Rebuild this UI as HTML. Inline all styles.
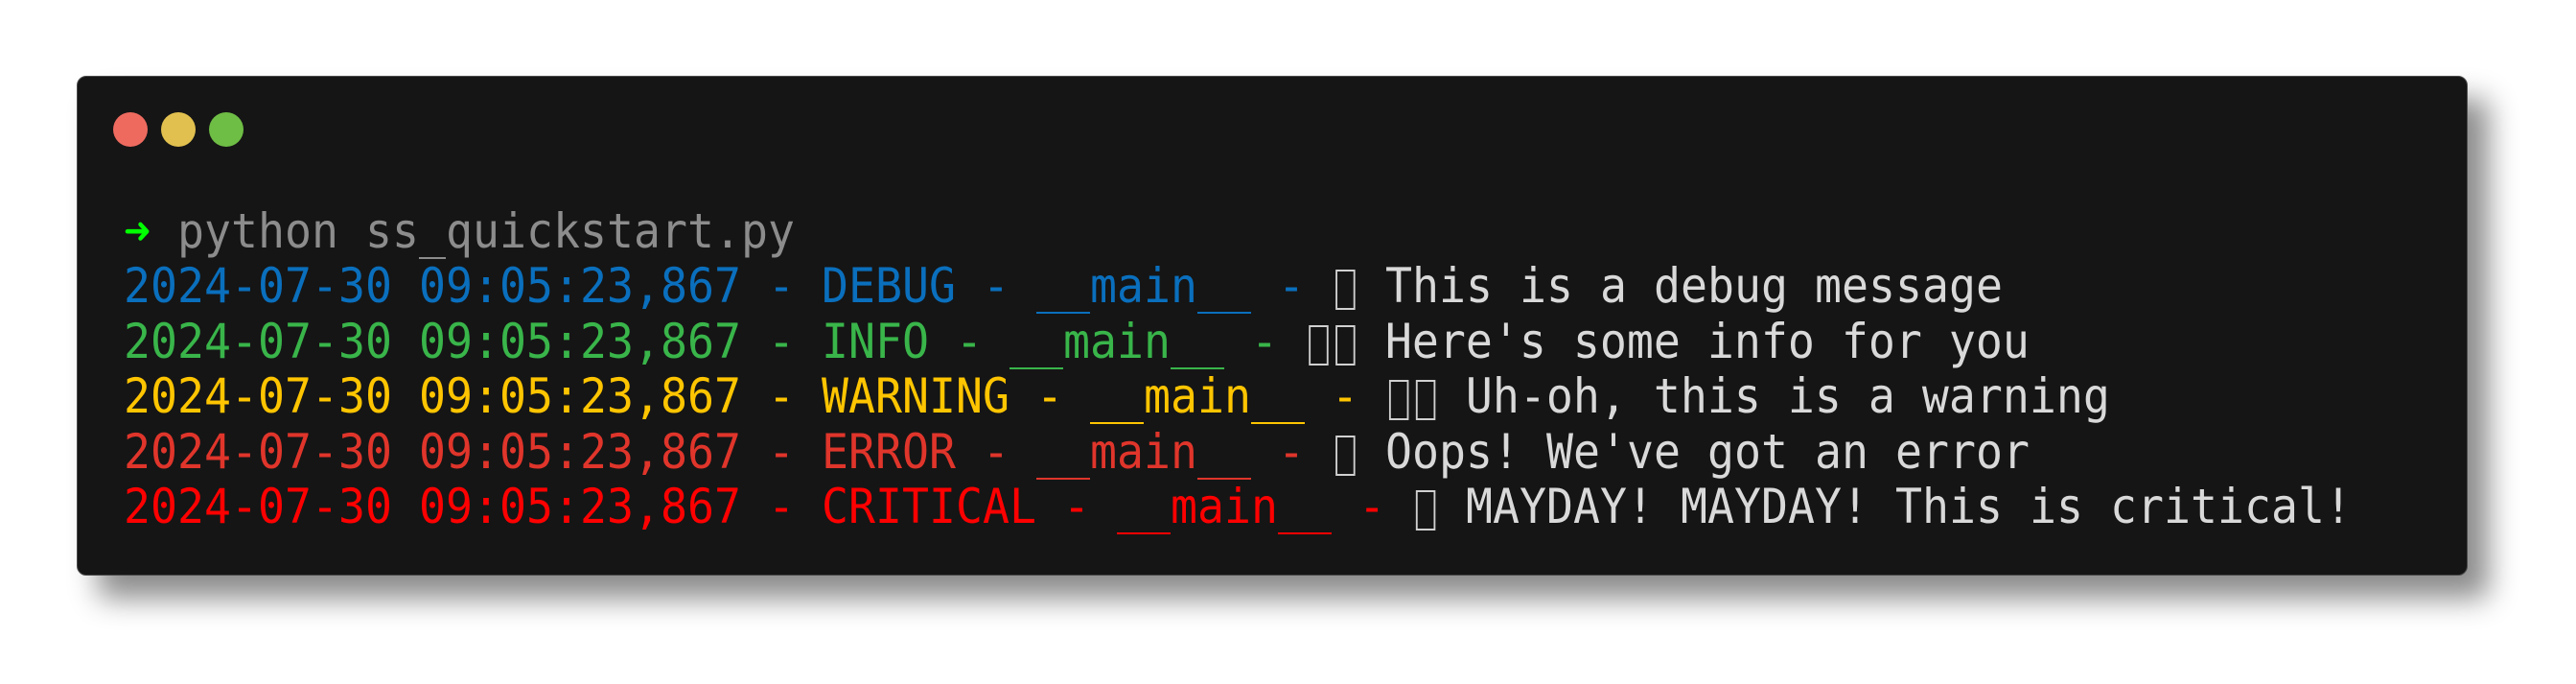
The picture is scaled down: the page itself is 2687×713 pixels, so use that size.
<!DOCTYPE html>
<html><head><meta charset="utf-8"><style>
html,body{margin:0;padding:0;background:#fff;width:2687px;height:713px;overflow:hidden;}
.win{position:absolute;left:80px;top:79px;width:2492px;height:519px;background:#151515;border:1px solid #4a4a4a;border-radius:10px;box-shadow:22px 24px 30px rgba(0,0,0,0.45);}
.dot{position:absolute;top:117px;width:36px;height:36px;border-radius:50%;}
.txt{position:absolute;left:129px;top:213px;font-family:"DejaVu Sans Mono","Liberation Mono",monospace;font-size:50px;line-height:57.4px;white-space:pre;transform:scaleX(0.9302);transform-origin:0 0;color:#d9d9d9;}
.b{display:inline-block;width:22px;height:42px;border:2px solid #d0d0d0;box-sizing:border-box;vertical-align:-8px;margin:0 4px;}
.bl{color:#0a6fbd}.gr{color:#39b54a}.ye{color:#ffc500}.er{color:#e0352b}.cr{color:#ff0000}.gy{color:#8c8c8c}.ar{color:#00ff00}
</style></head><body>
<div class="win"></div>
<div class="dot" style="left:118px;background:#ee6a5f"></div>
<div class="dot" style="left:168px;background:#e1c04f"></div>
<div class="dot" style="left:218px;background:#6ebd45"></div>
<div class="txt"><span class="ar">➜</span> <span class="gy">python ss_quickstart.py</span>
<span class="bl">2024-07-30 09:05:23,867 - DEBUG - __main__ - </span><span class="b"></span> This is a debug message
<span class="gr">2024-07-30 09:05:23,867 - INFO - __main__ - </span><span class="b"></span><span class="b"></span> Here's some info for you
<span class="ye">2024-07-30 09:05:23,867 - WARNING - __main__ - </span><span class="b"></span><span class="b"></span> Uh-oh, this is a warning
<span class="er">2024-07-30 09:05:23,867 - ERROR - __main__ - </span><span class="b"></span> Oops! We've got an error
<span class="cr">2024-07-30 09:05:23,867 - CRITICAL - __main__ - </span><span class="b"></span> MAYDAY! MAYDAY! This is critical!</div>
</body></html>
